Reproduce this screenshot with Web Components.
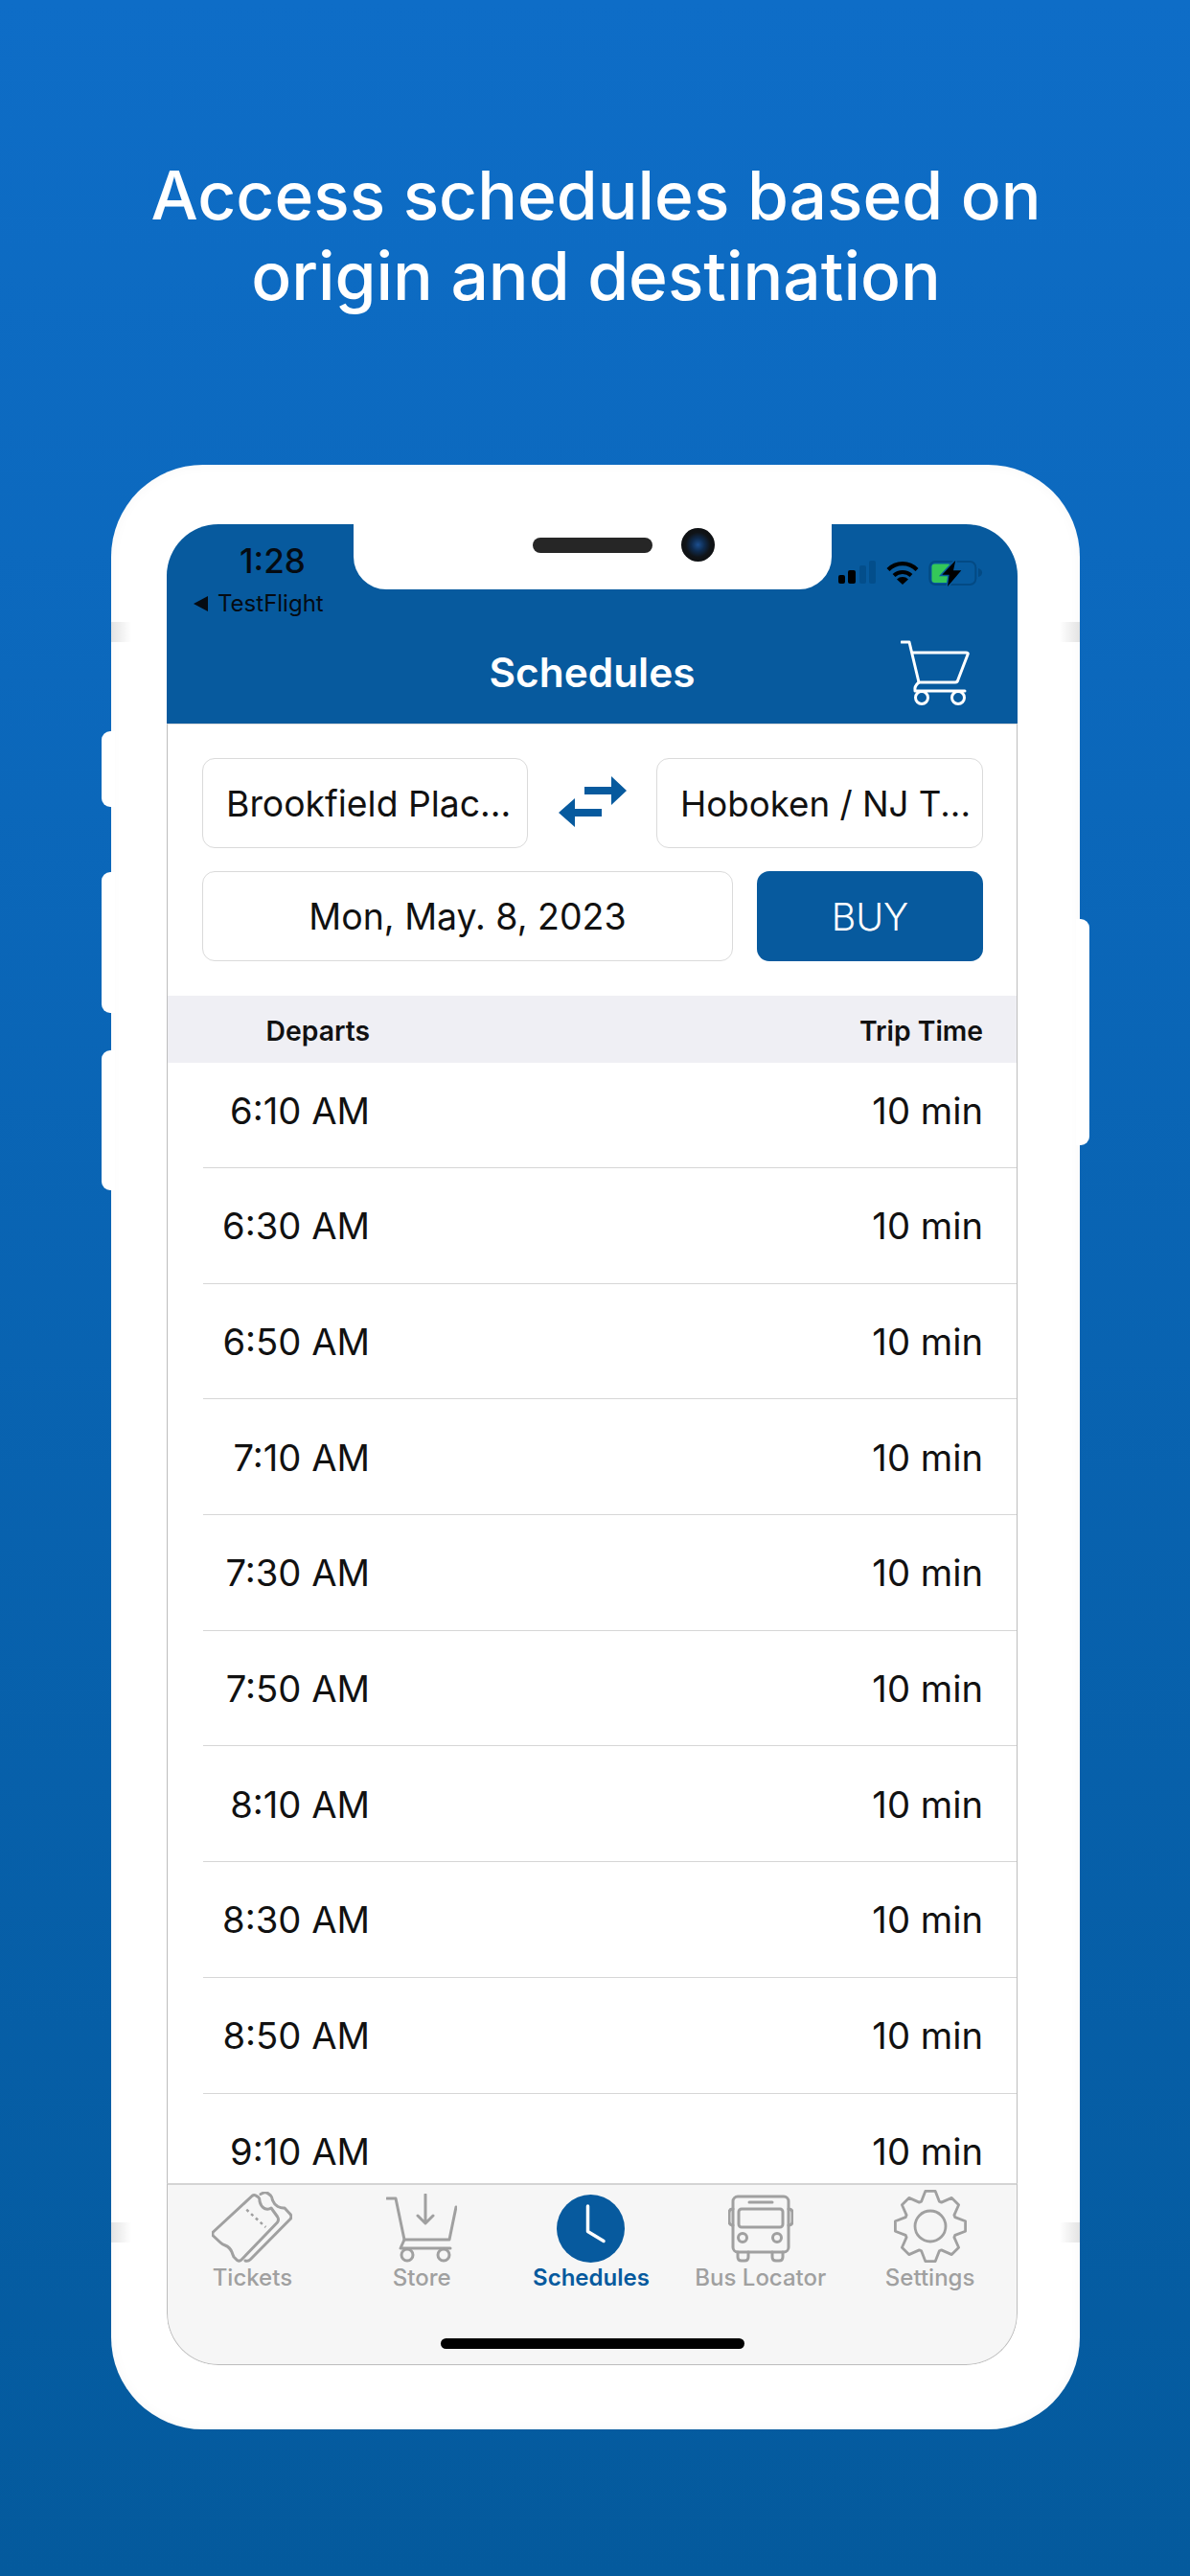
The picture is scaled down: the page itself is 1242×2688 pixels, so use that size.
<!doctype html>
<html lang="en"><head><meta charset="utf-8"><title>Schedules</title>
<style>
html,body{margin:0;padding:0}
body{font-family:Inter,"Liberation Sans",sans-serif}
</style></head>
<body>
<app-shot>
  <hero-title>Access schedules based on<br>origin and destination</hero-title>
  <phone-frame>
    <nav-header></nav-header>
    <route-form></route-form>
    <schedule-list>
      <schedule-row first time="6:10 AM" trip="10 min"></schedule-row>
      <schedule-row time="6:30 AM" trip="10 min"></schedule-row>
      <schedule-row time="6:50 AM" trip="10 min"></schedule-row>
      <schedule-row time="7:10 AM" trip="10 min"></schedule-row>
      <schedule-row time="7:30 AM" trip="10 min"></schedule-row>
      <schedule-row time="7:50 AM" trip="10 min"></schedule-row>
      <schedule-row time="8:10 AM" trip="10 min"></schedule-row>
      <schedule-row time="8:30 AM" trip="10 min"></schedule-row>
      <schedule-row time="8:50 AM" trip="10 min"></schedule-row>
      <schedule-row time="9:10 AM" trip="10 min" last></schedule-row>
    </schedule-list>
    <tab-bar>
      <tab-item icon="ticket" label="Tickets"></tab-item>
      <tab-item icon="store" label="Store"></tab-item>
      <tab-item icon="clock" label="Schedules" active></tab-item>
      <tab-item icon="bus" label="Bus Locator"></tab-item>
      <tab-item icon="gear" label="Settings"></tab-item>
    </tab-bar>
  </phone-frame>
</app-shot>
<script>
function def(name, html){
  customElements.define(name, class extends HTMLElement{
    connectedCallback(){
      if(this.shadowRoot) return;
      const s=this.attachShadow({mode:'open'});
      s.innerHTML = typeof html==='function' ? html(this) : html;
    }
  });
}
def('app-shot',`<style>
:host{display:block;width:1242px;height:2688px;overflow:hidden;box-sizing:border-box;
background:linear-gradient(180deg,#0e6dc7 0%,#045a9d 100%);padding-top:162px;font-family:Inter,"Liberation Sans",sans-serif}
</style><slot></slot>`);
def('hero-title',`<style>
:host{display:block;text-align:center;color:#fff;font-size:69.500px;line-height:84px;font-weight:500;height:168px;margin-bottom:155px;padding-left:2px}
</style><slot></slot>`);

def('phone-frame',`<style>
:host{display:block;position:relative;box-sizing:border-box;width:1011px;height:2050px;margin-left:116px;background:#fff;border-radius:96px;
padding:62px 65px 67px 58px;box-shadow:inset 0 0 14px rgba(0,0,0,.035)}
.screen{position:relative;height:1921px;display:flex;flex-direction:column;border-radius:54px;overflow:hidden;background:#fff}
.btn{position:absolute;background:#fff}
.l{left:-10px;width:14px;border-radius:9px 0 0 9px}
.r{right:-10px;width:14px;border-radius:0 9px 9px 0}
.band{position:absolute;width:21px;height:21px}
.bl{left:0;background:linear-gradient(90deg,#e3e3e3,#fff)}
.br{right:0;background:linear-gradient(270deg,#e3e3e3,#fff)}
.notch{position:absolute;left:195px;top:0;width:499px;height:68px;background:#fff;border-radius:0 0 34px 34px;z-index:2;
display:flex;align-items:flex-start;padding-left:187px;box-sizing:border-box}
.spk{width:125px;height:16px;margin-top:14px;border-radius:8px;background:#262626}
.cam{width:35px;height:35px;margin:4px 0 0 30px;border-radius:50%;background:radial-gradient(circle at 50% 50%,#1c4f8f 0,#0e2a4d 28%,#101418 52%,#0a0a0a 100%)}
</style>
<div class="btn l" style="top:278px;height:79px"></div>
<div class="btn l" style="top:425px;height:147px"></div>
<div class="btn l" style="top:611px;height:146px"></div>
<div class="btn r" style="top:474px;height:236px"></div>
<div class="band bl" style="top:164px"></div><div class="band br" style="top:164px"></div>
<div class="band bl" style="top:1834px"></div><div class="band br" style="top:1834px"></div>
<div class="screen"><div class="notch"><div class="spk"></div><div class="cam"></div></div><slot></slot></div>`);

def('nav-header',`<style>
:host{display:block;height:208px;background:#075a9e;flex:none}
.status{display:flex;justify-content:space-between;align-items:flex-start;height:88px;box-sizing:content-box;padding:20px 35px 0 28px}
.time{font-size:35px;line-height:36px;font-weight:500;color:#050b12;padding-left:48px}
.back{display:flex;align-items:center;gap:10px;margin-top:12px;font-size:24px;line-height:30px;color:#050b12}
.icons{display:flex;align-items:flex-start;gap:11px;padding-top:18px}
.icons svg{display:block}
.title{display:grid;grid-template-columns:1fr auto 1fr;align-items:center;height:100px;padding-bottom:6px;box-sizing:border-box}
h1{grid-column:2;margin:0;font-size:42.400px;line-height:50px;font-weight:600;color:#fff}
.cart{grid-column:3;justify-self:end;margin-right:50px}
</style>
<div class="status">
  <div>
    <div class="time">1:28</div>
    <div class="back"><svg width="15" height="16" viewBox="0 0 15 16"><path d="M15 0V16L0 8Z" fill="#050b12"/></svg><span>TestFlight</span></div>
  </div>
  <div class="icons">
    <svg width="39" height="24" viewBox="0 0 39 24"><g fill="#000"><rect x="0" y="15" width="7" height="9" rx="2"/><rect x="10" y="10" width="8" height="14" rx="2"/></g><g fill="#034e8b"><rect x="22" y="5" width="7" height="19" rx="2"/><rect x="32" y="0" width="7" height="24" rx="2"/></g></svg>
    <svg width="34" height="26" viewBox="0 0 34 26" fill="none" stroke="#000"><path d="M2 9.500A21 21 0 0 1 32 9.500" stroke-width="4.200"/><path d="M8 15.500A13 13 0 0 1 26 15.500" stroke-width="4"/><path d="M17 25 11 19.500A8.500 8.500 0 0 1 23 19.500Z" fill="#000" stroke="none"/></svg>
    <svg width="58" height="30" viewBox="969 585 58 30" style="margin-top:-2px;margin-left:-1px"><rect x="970.300" y="588" width="48" height="24" rx="6" fill="none" stroke="#034a84" stroke-width="2"/><rect x="972.500" y="590.500" width="20" height="19.500" rx="3" fill="#34c759"/><path d="M1021 595c3 1 4 2.500 4 4.500s-1 3.500-4 4.500Z" fill="#034a84"/><path d="M997.300 586.700 983.300 601.700H990.700L989 614 1003.300 597.300H995Z" fill="#000" stroke="#075a9e" stroke-width="3" paint-order="stroke"/></svg>
  </div>
</div>
<div class="title"><h1>Schedules</h1>
<svg class="cart" width="72" height="68" viewBox="0 0 72 68" fill="none" stroke="#fff" stroke-width="3" stroke-linejoin="round" stroke-linecap="round"><path d="M1 2H9L19 44H57Q59.500 44 60 41L70 15Q71 13 68 13H12"/><path d="M19 44Q14 48 15 53H67"/><circle cx="22" cy="60" r="6.500"/><circle cx="60" cy="60" r="6.500"/></svg></div>`);

def('route-form',`<style>
:host{display:block;flex:none;box-sizing:border-box;height:284px;border-top:1px solid #dcdcdc;border-left:1px solid #bdbdbd;border-right:1px solid #bdbdbd;padding:35px 35px 36px 36px}
.g{display:grid;grid-template-columns:340px 1fr 341px;height:94px}
.h{display:grid;grid-template-columns:554px 236px;column-gap:25px;height:94px;margin-top:24px}
.box{box-sizing:border-box;border:1px solid #dadada;border-radius:13px;display:flex;align-items:center;color:#111;white-space:nowrap;background:#fff}
.a{padding-left:24px;font-size:37.300px}
.d{justify-content:center;font-size:37.500px}
.swap{display:flex;justify-content:center;padding-top:19px}
.swap svg{display:block}
.buy{background:#075a9e;color:#fff;border-radius:13px;display:flex;align-items:center;justify-content:center;font-size:39.300px;font-weight:300}
</style>
<div class="g"><div class="box a">Brookfield Plac...</div>
<div class="swap"><svg width="71" height="54" viewBox="0 0 71 54"><path fill="#075a9e" d="M27 11H55V0L71 15 55 30V19H27ZM0 38 17 23V34H45V42H17V53Z"/></svg></div>
<div class="box a" style="font-size:36.700px">Hoboken / NJ T...</div></div>
<div class="h"><div class="box d">Mon, May. 8, 2023</div><div class="buy">BUY</div></div>`);

def('schedule-list',`<style>
:host{display:flex;flex-direction:column;flex:1;min-height:0;overflow:hidden;border-left:1px solid #bdbdbd;border-right:1px solid #bdbdbd;background:#fff}
.head{flex:none;height:70px;background:#efeff4;display:flex;justify-content:space-between;align-items:center;box-sizing:border-box;padding:4px 35px 0 0;font-size:28.300px;font-weight:600;color:#111}
.head span:first-child{width:211px;text-align:right}
.rows{flex:none}
</style><div class="head"><span>Departs</span><span>Trip Time</span></div><div class="rows"><slot></slot></div>`);

def('schedule-row',h=>`<style>
:host{display:flex;justify-content:space-between;align-items:center;box-sizing:border-box;height:120.700px;margin-left:37px;border-bottom:1px solid #d6d6d6;padding:1px 35px 0 0;font-size:38.200px;color:#111}
:host([first]){height:110px;padding:0 35px 10px 0}
.t{width:174px;text-align:right}
</style><span class="t">${h.getAttribute('time')}</span><span>${h.getAttribute('trip')}</span>`);

def('tab-bar',`<style>
:host{display:flex;flex-direction:column;flex:none;height:190px;box-sizing:border-box;background:#f6f6f6;border-top:2px solid #d4d4d4;border-left:1px solid #bdbdbd;border-right:1px solid #bdbdbd;border-bottom:1px solid #bdbdbd;border-radius:0 0 54px 54px}
.items{display:grid;grid-template-columns:repeat(5,1fr);padding:7px 2px 0 0}
.home{width:317px;height:11px;background:#000;border-radius:6px;margin:auto auto 16px}
</style><div class="items"><slot></slot></div><div class="home"></div>`);

function gearPath(){
  const c=38,p=[],R=37,r=27.5;
  for(let i=0;i<8;i++){
    const a=(i*45-90)*Math.PI/180;
    [[r,-.35],[R,-.14],[R,.14],[r,.35]].forEach(([q,d])=>{
      p.push((c+q*Math.cos(a+d)).toFixed(1)+' '+(c+q*Math.sin(a+d)).toFixed(1));
    });
  }
  return 'M'+p.join('L')+'Z';
}
const ICONS={
 ticket:`<svg width="84" height="76" viewBox="0 0 84 76" fill="none" stroke="#a0a0a0" stroke-width="3" stroke-linejoin="round" stroke-linecap="round"><path d="M1.500 42 42 4.500Q44 3 46 4L49 6Q50 7 50 10Q51 15 55 17.500Q59 19 62 17L68.500 26Q70.500 29 68.500 32L31 71Q29 73 26.500 71.500L23 68Q22 66 21 63Q19 58 14 56Q11 55 9 53L1.500 46Q0 44 1.500 42Z"/><path d="M51 2.500 54.500 .8Q57 .5 59 2L61.500 4Q63 5.500 63.500 9Q65 13 69 15.500Q73 17.500 76 17L82 23.500Q84 26 82 28.500L40.500 70.500Q38 73 35 72"/><path d="M36.300 18.700 56.300 37" stroke-width="2.500" stroke-dasharray="3 3.500" stroke-linecap="butt"/></svg>`,
 store:`<svg width="74" height="72" viewBox="0 0 74 72" fill="none" stroke="#a0a0a0" stroke-width="3" stroke-linejoin="round" stroke-linecap="round"><path d="M1 5H10L19 48H66L73 14"/><path d="M19 48 15 57H67"/><circle cx="22" cy="64" r="6"/><circle cx="60" cy="64" r="6"/><path d="M41 1V30M33 23 41 31 49 23"/></svg>`,
 clock:`<svg width="71" height="71" viewBox="0 0 71 71"><circle cx="35.500" cy="35.500" r="35.500" fill="#075a9e"/><path d="M32.500 12V38.500L49 48.500" fill="none" stroke="#fff" stroke-width="3.500" stroke-linecap="round" stroke-linejoin="round"/></svg>`,
 bus:`<svg width="68" height="71" viewBox="0 0 68 71" fill="none" stroke="#a0a0a0" stroke-width="3" stroke-linejoin="round" stroke-linecap="round"><rect x="5" y="2" width="58" height="58" rx="5"/><path d="M5 15Q1 15 1 19V28Q1 32 5 32M63 15Q67 15 67 19V28Q67 32 63 32"/><rect x="11" y="15" width="46" height="19" rx="3"/><path d="M22 8H46"/><circle cx="15" cy="45" r="4.500"/><circle cx="51" cy="45" r="4.500"/><path d="M10 60V65Q10 69 14 69H17Q21 69 21 65V60M46 60V65Q46 69 50 69H53Q57 69 57 65V60"/></svg>`,
 gear:`<svg width="76" height="76" viewBox="0 2 76 76" style="overflow:visible" fill="none" stroke="#a0a0a0" stroke-width="2.800" stroke-linejoin="round"><path d="${gearPath()}"/><circle cx="38" cy="38" r="16"/></svg>`
};
def('tab-item',h=>`<style>
:host{display:flex;flex-direction:column;align-items:center;min-width:0;color:#a0a0a0;font-size:24px;font-weight:500}
:host([active]){color:#075a9e;font-weight:600}
.i{height:76px;display:flex;align-items:center;justify-content:center}
.i svg{display:block}
.l{line-height:28px;white-space:nowrap}
</style><div class="i">${ICONS[h.getAttribute('icon')]}</div><div class="l">${h.getAttribute('label')}</div>`);
</script>
</body></html>
